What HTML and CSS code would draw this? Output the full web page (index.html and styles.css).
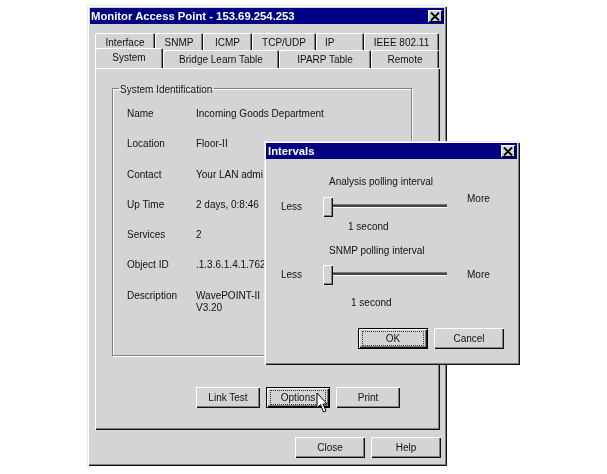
FILE: index.html
```html
<!DOCTYPE html>
<html lang="en">
<head>
<meta charset="utf-8">
<title>Monitor Access Point</title>
<link rel="stylesheet" href="styles.css">
</head>
<body>
<div class="window main">
  <div class="titlebar"><span>Monitor Access Point - 153.69.254.253</span><span class="close">
    <svg width="10" height="9" viewBox="0 0 10 9"><path d="M1 0.5 L9 8.5 M9 0.5 L1 8.5" stroke="#000" stroke-width="1.8" fill="none"/></svg></span></div>
  <div class="tabs back">
    <div class="tab w60">Interface</div>
    <div class="tab w48">SNMP</div>
    <div class="tab w49">ICMP</div>
    <div class="tab w64">TCP/UDP</div>
    <div class="tab w48 left">IP</div>
    <div class="tab w75">IEEE 802.11</div>
  </div>
  <div class="tabs front">
    <div class="tab active w68">System</div>
    <div class="tab w116">Bridge Learn Table</div>
    <div class="tab w92">IPARP Table</div>
    <div class="tab w68">Remote</div>
  </div>
  <div class="panel">
    <fieldset class="group">
      <legend>System Identification</legend>
      <dl class="info">
        <dt>Name</dt><dd>Incoming Goods Department</dd>
        <dt>Location</dt><dd>Floor-II</dd>
        <dt>Contact</dt><dd>Your LAN admi</dd>
        <dt>Up Time</dt><dd>2 days, 0:8:46</dd>
        <dt>Services</dt><dd>2</dd>
        <dt>Object ID</dt><dd>.1.3.6.1.4.1.762</dd>
        <dt>Description</dt><dd>WavePOINT-II<br>V3.20</dd>
      </dl>
    </fieldset>
    <div class="actions">
      <button class="btn">Link Test</button>
      <button class="btn default"><span class="focus">Options</span></button>
      <button class="btn">Print</button>
    </div>
  </div>
  <div class="footer">
    <button class="btn wide">Close</button>
    <button class="btn wide">Help</button>
  </div>
</div>

<svg class="cursor" width="12" height="22" viewBox="0 0 12 22"><path d="M1 1 L1 16 L4.5 12.5 L7.5 20 L10 19 L7 12 L11 12 Z" fill="#fff" stroke="#000" stroke-width="1"/></svg>

<div class="window dialog">
  <div class="titlebar"><span>Intervals</span><span class="close">
    <svg width="10" height="9" viewBox="0 0 10 9"><path d="M1 0.5 L9 8.5 M9 0.5 L1 8.5" stroke="#000" stroke-width="1.8" fill="none"/></svg></span></div>
  <div class="dialog-body">
    <div class="heading">Analysis polling interval</div>
    <div class="slider-row">
      <span class="less">Less</span>
      <div class="slider"><span class="thumb"></span><span class="track"></span></div>
      <span class="more raised">More</span>
    </div>
    <div class="value">1 second</div>
    <div class="heading second">SNMP polling interval</div>
    <div class="slider-row tight">
      <span class="less">Less</span>
      <div class="slider"><span class="thumb"></span><span class="track"></span></div>
      <span class="more">More</span>
    </div>
    <div class="value last">1 second</div>
    <div class="dialog-actions">
      <button class="btn wide default"><span class="focus">OK</span></button>
      <button class="btn wide">Cancel</button>
    </div>
  </div>
</div>
</body>
</html>
```
FILE: styles.css
```css
* { box-sizing: border-box; }
html, body { margin: 0; padding: 0; background: #fff; }
body {
  width: 607px;
  height: 474px;
  position: relative;
  overflow: hidden;
  font-family: "Liberation Sans", Arial, sans-serif;
  font-size: 10px;
  color: #111;
}
.window {
  position: absolute;
  background: #d4d4d4;
  box-shadow: inset 1px 1px 0 #e8e8e8, inset 2px 2px 0 #fff, inset -1px -1px 0 #111, inset -2px -2px 0 #808080;
  padding: 3px;
  filter: blur(0.3px);
}
.main { left: 87px; top: 5px; width: 360px; height: 461px; }
.dialog { left: 264px; top: 141px; width: 256px; height: 224px; padding: 2px 3px 3px 2px; }
.titlebar {
  height: 16px;
  background: #000080;
  color: #fff;
  font-weight: bold;
  font-size: 11.3px;
  display: flex;
  align-items: center;
  justify-content: space-between;
  padding: 0 2px 0 1px;
}
.dialog .titlebar { padding-left: 2px; }
.close {
  width: 14px;
  height: 12px;
  background: #d4d4d4;
  box-shadow: inset 1px 1px 0 #fff, inset -1px -1px 0 #000;
  display: flex;
  align-items: center;
  justify-content: center;
}
.tabs { display: flex; margin-left: 5px; height: 17px; }
.tabs.back { margin-top: 9px; height: 17px; }
.tabs.front { height: 18px; }
.tab {
  display: flex;
  align-items: center;
  justify-content: center;
  height: 100%;
  border-radius: 2px 2px 0 0;
  box-shadow: inset 1px 1px 0 #fff, inset -1px 0 0 #111, inset -2px 0 0 #808080;
  padding-top: 2px;
}
.front .tab { padding-top: 0; }
.tab.left { justify-content: flex-start; padding-left: 9px; }
.active { height: 20px; margin-top: -2px; padding-bottom: 2px; position: relative; z-index: 1; background: #d4d4d4; }
.w48 { width: 48px; } .w49 { width: 49px; } .w60 { width: 60px; } .w64 { width: 64px; }
.w68 { width: 68px; } .w75 { width: 75px; } .w92 { width: 92px; } .w116 { width: 116px; }
.panel {
  margin-left: 5px;
  width: 345px;
  height: 362px;
  padding: 14px 0 0 17px;
  box-shadow: inset 1px 1px 0 #fff, inset -1px -1px 0 #111, inset -2px -2px 0 #808080;
}
.group {
  width: 300px;
  height: 274px;
  margin: 0;
  padding: 0 0 0 14px;
  border: 1px solid #808080;
  box-shadow: 1px 1px 0 #fff, inset 1px 1px 0 #fff;
}
.group legend { margin-left: -8px; padding: 2px 2px 0 1px; font-size: 10px; }
.info {
  margin: 13px 0 0;
  display: grid;
  grid-template-columns: 69px 1fr;
  grid-auto-rows: 30.3px;
}
.info dt, .info dd { margin: 0; line-height: 12px; white-space: nowrap; }
.actions { display: flex; gap: 6px; margin: 31px 0 0 84px; }
.btn {
  width: 64px;
  height: 21px;
  padding: 0;
  border: 0;
  background: #d4d4d4;
  font: inherit;
  color: inherit;
  box-shadow: inset 1px 1px 0 #fff, inset -1px -1px 0 #111, inset -2px -2px 0 #808080;
}
.btn.wide { width: 70px; }
.btn.default {
  box-shadow: inset 0 0 0 1px #000, inset 2px 2px 0 #fff, inset -2px -2px 0 #111, inset -3px -3px 0 #808080;
}
.focus {
  display: flex;
  align-items: center;
  justify-content: center;
  margin: 3px 4px 3px;
  height: 15px;
  border: 1px dotted #333;
}
.footer { display: flex; gap: 6px; margin: 7px 0 0 205px; }
.cursor { position: absolute; left: 316px; top: 392px; }

.dialog-body { padding-top: 17px; }
.heading { padding-left: 63px; line-height: 12px; }
.heading.second { margin-top: 12px; }
.slider-row {
  display: flex;
  align-items: center;
  height: 20px;
  margin-top: 8px;
  padding-left: 15px;
}
.slider-row.tight { margin-top: 7px; }
.less { width: 42px; }
.slider { width: 124px; height: 20px; display: flex; align-items: center; }
.thumb {
  width: 10px;
  height: 20px;
  flex: none;
  margin-top: 2px;
  background: #d4d4d4;
  box-shadow: inset 1px 1px 0 #fff, inset -1px -1px 0 #111, inset -2px -2px 0 #808080;
}
.track { flex: 1; height: 4px; background: #444; border-top: 1px solid #777; border-bottom: 1px solid #fff; }
.more { margin-left: 20px; }
.more.raised { position: relative; top: -8px; }
.value { padding-left: 82px; line-height: 12px; margin-top: 5px; }
.value.last { padding-left: 85px; margin-top: 13px; }
.dialog-actions { display: flex; gap: 6px; margin: 19px 0 0 92px; }
```
